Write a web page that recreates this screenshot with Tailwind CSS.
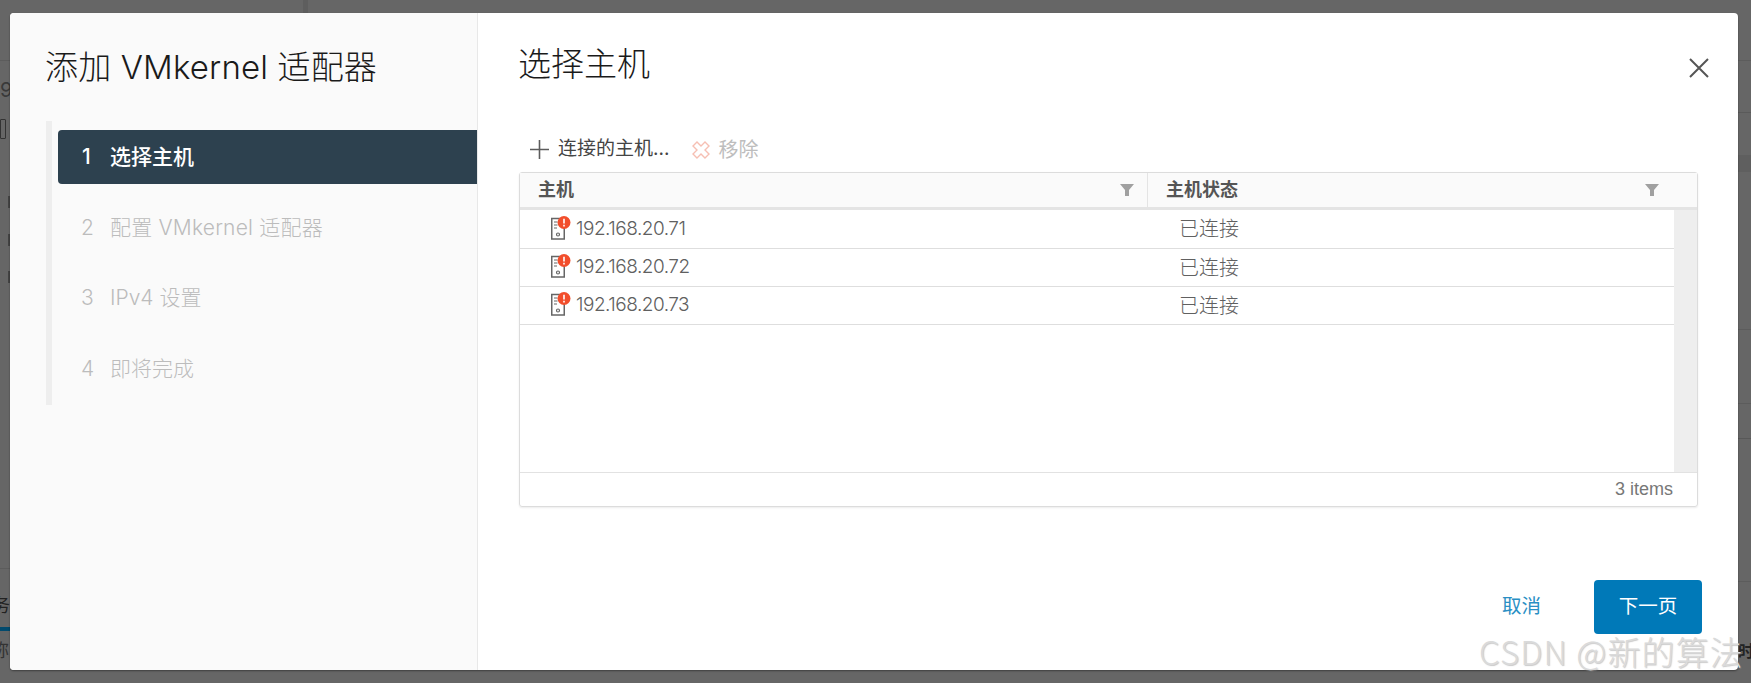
<!DOCTYPE html>
<html lang="zh">
<head>
<meta charset="utf-8">
<script src="https://cdn.jsdelivr.net/npm/@tailwindcss/browser@4"></script>
</head>
<body class="m-0">
<div class="relative w-[1751px] h-[683px] overflow-hidden bg-[#666666] font-['Inter','Noto_Sans_CJK_SC',sans-serif]">
  <!-- dimmed page behind the dialog -->
  <div class="absolute left-0 top-0 w-full h-[61px] border-b border-[#5c5c5c]"></div>
  <div class="absolute left-[303px] top-0 w-[5px] h-[13px] bg-[#5e5e5e]"></div>
  <div class="absolute left-[1738px] top-[112px] w-[13px] h-px bg-[#5a5a5a]"></div>
  <div class="absolute left-[1738px] top-[155px] w-[13px] h-[17px] bg-[#5f5f5f]"></div>
  <div class="absolute left-[1738px] top-[329px] w-[13px] h-px bg-[#5c5c5c]"></div>
  <div class="absolute left-[1738px] top-[403px] w-[13px] h-px bg-[#5c5c5c]"></div>
  <div class="absolute left-[1738px] top-[438px] w-[13px] h-px bg-[#585858]"></div>
  <div class="absolute left-[1738px] top-[581px] w-[13px] h-px bg-[#5c5c5c]"></div>
  <div class="absolute left-0 top-[80px] text-[20px] leading-[20px] text-[#3a3a3a]">9</div>
  <div class="absolute left-0 top-[119px] w-[6px] h-[20px] border border-[#333] rounded-[1px]"></div>
  <div class="absolute left-[8px] top-[196px] w-[2px] h-[12px] bg-[#444]"></div>
  <div class="absolute left-[8px] top-[234px] w-[2px] h-[12px] bg-[#444]"></div>
  <div class="absolute left-[8px] top-[271px] w-[2px] h-[12px] bg-[#444]"></div>
  <div class="absolute left-0 top-[568px] w-[10px] h-px bg-[#5c5c5c]"></div>
  <div class="absolute left-[-8px] top-[596px] w-[18px] overflow-hidden text-[18px] leading-[20px] text-[#222] whitespace-nowrap">务</div>
  <div class="absolute left-0 top-[627px] w-[10px] h-[4px] bg-[#024a6d]"></div>
  <div class="absolute left-[-9px] top-[641px] w-[18px] overflow-hidden text-[18px] leading-[20px] text-[#333] whitespace-nowrap">称</div>
  <div class="absolute left-[1738px] top-[642px] text-[16px] leading-[18px] font-bold text-[#222] whitespace-nowrap">时</div>

  <!-- dialog -->
  <div class="absolute left-[10px] top-[13px] w-[1728px] h-[657px] flex rounded-[4px] bg-white overflow-hidden shadow-[0_1px_2px_rgba(0,0,0,0.4)]">
    <aside class="w-[468px] h-full shrink-0 bg-[#fafafa] border-r border-[#e8e8e8] pl-[36px]">
      <h2 class="mt-[34px] -ml-px text-[33px] leading-[40px] font-light text-[#1a1a1a] whitespace-nowrap tracking-[0.15px]">添加 VMkernel 适配器</h2>
      <div class="mt-[34px] border-l-[6px] border-[#eeeeee] pl-[6px] pt-[9px] h-[284px] flex flex-col gap-[16.5px] text-[21px] text-[#bcbcbc]">
        <div class="h-[54px] flex items-center rounded-l-[4px] bg-[#2d414f] text-white pl-[24px] font-medium"><span class="w-[28px]">1</span><span>选择主机</span></div>
        <div class="h-[54px] flex items-center pl-[23px] font-light"><span class="w-[29px]">2</span><span class="tracking-[0.2px]">配置 VMkernel 适配器</span></div>
        <div class="h-[54px] flex items-center pl-[23px] font-light"><span class="w-[29px]">3</span><span>IPv4 设置</span></div>
        <div class="h-[54px] flex items-center pl-[23px] font-light"><span class="w-[29px]">4</span><span>即将完成</span></div>
      </div>
    </aside>

    <main class="flex-1 relative pl-[41px] pr-[41px] flex flex-col">
      <div class="flex items-start justify-between h-[114px]">
        <h3 class="mt-[31px] -ml-px text-[33px] leading-[40px] font-light text-[#1a1a1a]">选择主机</h3>
        <svg class="mt-[44px] mr-[-12px]" width="22" height="22" viewBox="0 0 22 22" fill="none" stroke="#555555" stroke-width="2"><path d="M2 2 20 20M20 2 2 20"/></svg>
      </div>

      <div class="h-[45px] flex items-center pl-[11px]">
        <svg width="19" height="19" viewBox="0 0 19 19" fill="none" stroke="#5c5c5c" stroke-width="1.6"><path d="M9.5 0v19M0 9.5h19"/></svg>
        <span class="ml-[9px] text-[19px] text-[#444444]">连接的主机...</span>
        <svg class="ml-[22px]" width="20" height="20" viewBox="0 0 20 20" fill="none" stroke="#f6bfb3" stroke-width="1.4"><path d="M6 2 10 6 14 2 18 6 14 10 18 14 14 18 10 14 6 18 2 14 6 10 2 6Z"/></svg>
        <span class="ml-[7px] text-[20px] text-[#bdbdbd]">移除</span>
      </div>

      <div class="h-[335px] w-[1179px] flex flex-col rounded-[3px] border border-[#dcdcdc] shadow-[0_1px_2px_rgba(0,0,0,0.08)] text-[#606060]">
        <div class="h-[37px] shrink-0 flex bg-[#fafafa] border-b-[3px] border-[#e4e4e4] text-[18px] font-bold leading-[34px] text-[#555555]">
          <div class="w-[628px] border-r border-[#e4e4e4] pl-[18px] pr-[13px] flex items-center justify-between">
            <span>主机</span>
            <svg width="14" height="14" viewBox="0 0 14 14" fill="#a0a0a0"><path d="M0 1h14L9 7v6H5V7Z"/></svg>
          </div>
          <div class="flex-1 pl-[18px] pr-[38px] flex items-center justify-between">
            <span>主机状态</span>
            <svg width="14" height="14" viewBox="0 0 14 14" fill="#a0a0a0"><path d="M0 1h14L9 7v6H5V7Z"/></svg>
          </div>
        </div>
        <div class="flex-1 flex min-h-0">
          <div class="flex-1 text-[19px] font-light">
            <div class="h-[39px] flex items-center border-b border-[#dedede]">
              <div class="w-[629px] pl-[28px] flex items-center">
                <svg class="shrink-0 -mt-[3px]" width="24" height="24" viewBox="0 0 24 24" fill="none"><rect x="3.75" y="2.5" width="12.5" height="20.5" stroke="#666666" stroke-width="1.5"/><path d="M6 6h3.5M6 9h3.5M6 12h3" stroke="#666666" stroke-width="1.2"/><circle cx="10" cy="18.5" r="1.5" stroke="#666666" stroke-width="1.2"/><circle cx="16" cy="6.5" r="6.5" fill="#f24e2c"/><path d="M16 2.8v4.6M16 8.8v1.6" stroke="#ffffff" stroke-width="1.6"/></svg>
                <span class="ml-[4px] tracking-[-0.5px]">192.168.20.71</span>
              </div>
              <span class="pl-[30px] text-[20px]">已连接</span>
            </div>
            <div class="h-[38px] flex items-center border-b border-[#dedede]">
              <div class="w-[629px] pl-[28px] flex items-center">
                <svg class="shrink-0 -mt-[3px]" width="24" height="24" viewBox="0 0 24 24" fill="none"><rect x="3.75" y="2.5" width="12.5" height="20.5" stroke="#666666" stroke-width="1.5"/><path d="M6 6h3.5M6 9h3.5M6 12h3" stroke="#666666" stroke-width="1.2"/><circle cx="10" cy="18.5" r="1.5" stroke="#666666" stroke-width="1.2"/><circle cx="16" cy="6.5" r="6.5" fill="#f24e2c"/><path d="M16 2.8v4.6M16 8.8v1.6" stroke="#ffffff" stroke-width="1.6"/></svg>
                <span class="ml-[4px] tracking-[-0.5px]">192.168.20.72</span>
              </div>
              <span class="pl-[30px] text-[20px]">已连接</span>
            </div>
            <div class="h-[38px] flex items-center border-b border-[#dedede]">
              <div class="w-[629px] pl-[28px] flex items-center">
                <svg class="shrink-0 -mt-[3px]" width="24" height="24" viewBox="0 0 24 24" fill="none"><rect x="3.75" y="2.5" width="12.5" height="20.5" stroke="#666666" stroke-width="1.5"/><path d="M6 6h3.5M6 9h3.5M6 12h3" stroke="#666666" stroke-width="1.2"/><circle cx="10" cy="18.5" r="1.5" stroke="#666666" stroke-width="1.2"/><circle cx="16" cy="6.5" r="6.5" fill="#f24e2c"/><path d="M16 2.8v4.6M16 8.8v1.6" stroke="#ffffff" stroke-width="1.6"/></svg>
                <span class="ml-[4px] tracking-[-0.5px]">192.168.20.73</span>
              </div>
              <span class="pl-[30px] text-[20px]">已连接</span>
            </div>
          </div>
          <div class="w-[23px] shrink-0 bg-[#eeeeee]"></div>
        </div>
        <div class="h-[34px] shrink-0 border-t border-[#e2e2e2] flex items-center justify-end pr-[24px] text-[18px] font-['Liberation_Sans',sans-serif] text-[#777777]">3 items</div>
      </div>

      <div class="mt-[73px] flex items-center justify-end mr-[-4px]">
        <span class="mr-[53px] text-[19.5px] text-[#2a8fc4]">取消</span>
        <button class="w-[108px] h-[54px] rounded-[4px] bg-[#0079b8] text-white text-[19.5px]">下一页</button>
      </div>
    </main>
  </div>

  <!-- watermark over everything -->
  <div class="absolute left-[1479px] top-[631px] text-[33px] leading-[40px] font-['Noto_Sans_CJK_SC',sans-serif] font-light text-[#dadada] whitespace-nowrap tracking-[1.1px] [text-shadow:1px_1px_1px_rgba(150,150,150,0.5)]">CSDN @新的算法</div>
</div>
</body>
</html>
